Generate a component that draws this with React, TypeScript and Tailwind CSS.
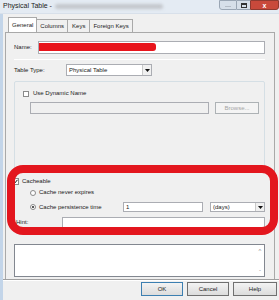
import React from 'react';

const font = { fontFamily: '"Liberation Sans", Arial, sans-serif' };

const Radio = ({ checked }: { checked?: boolean }) => (
  <div className="w-[6px] h-[6px] rounded-full border border-[#8a8a8a] bg-white flex items-center justify-center">
    {checked && <div className="w-[2px] h-[2px] rounded-full bg-[#222]" />}
  </div>
);

const Arrow = () => (
  <div className="w-[9px] h-full border-l border-[#c9c9c9] bg-[#f0f0f0] flex items-center justify-center">
    <svg width="5" height="3" viewBox="0 0 5 3">
      <path d="M0 0h5L2.5 3z" fill="#111" />
    </svg>
  </div>
);

export default function App() {
  return (
    <div className="relative w-[279px] h-[300px] overflow-hidden bg-[#f0f0f0] text-[6px] text-[#1a1a1a]" style={font}>
      {/* title bar */}
      <div className="h-[14px] flex items-start bg-[#e4ebf3] border-b border-[#d8e0ea]">
        <div className="flex items-center h-[12px] pl-[3px] gap-[3px]">
          <span className="text-[7px] text-[#222]">Physical Table -</span>
          <div className="w-[108px] h-[5px] rounded-full bg-[#c4c7cc] blur-[1.5px]" />
        </div>
        <div className="ml-auto flex h-[10px]">
          <div className="w-[18px] h-full rounded-bl-[3px] border border-[#9aa6b4] bg-[#d6dfe9] flex items-end justify-center pb-[2px]">
            <div className="w-[6px] h-[1px] bg-[#b4bcc6]" />
          </div>
          <div className="w-[13px] h-full border-y border-[#9aa6b4] bg-[#d6dfe9] flex items-center justify-center">
            <div className="w-[6px] h-[5px] border border-[#333] border-t-2" />
          </div>
          <div className="w-[29px] h-full rounded-br-[3px] bg-[#c9493b] border border-[#8f3a30] flex items-center justify-center text-white text-[7px] font-bold leading-none">
            x
          </div>
        </div>
      </div>

      <div className="flex h-[286px]">
        <div className="w-[3px] bg-[#c3d5e9]" />
        <div className="flex-1 flex flex-col pl-[2px]">
          {/* tabs */}
          <div className="flex items-end h-[18px] pl-[3px]">
            <div className="h-[15px] px-[3px] flex items-center border border-b-0 border-[#a9a9a9] bg-white">General</div>
            <div className="h-[13px] px-[3px] flex items-center border-r border-t border-[#a9a9a9]">Columns</div>
            <div className="h-[13px] px-[4px] flex items-center border-r border-t border-[#a9a9a9]">Keys</div>
            <div className="h-[13px] px-[3px] flex items-center border-r border-t border-[#a9a9a9]">Foreign Keys</div>
          </div>

          {/* panel */}
          <div className="w-[270px] h-[248px] border border-[#a9a9a9] border-b-0 flex flex-col pl-[8px] pr-[8px]">
            <div className="flex items-center mt-[8px] h-[13px]">
              <span className="w-[24px]">Name:</span>
              <div className="relative w-[227px] h-full border border-[#abadb3] bg-white">
                <div className="absolute left-0 top-[1px] w-[117px] h-[8px] bg-[#e8141c] rounded-r-[3px]" />
              </div>
            </div>
            <div className="mt-[5px] w-[251px] h-[1px] bg-[#a0a0a0] border-b border-white" />
            <div className="flex items-center mt-[4px] h-[12px]">
              <span className="w-[52px]">Table Type:</span>
              <div className="w-[86px] h-full border border-[#abadb3] bg-white flex items-center">
                <span className="flex-1 pl-[2px]">Physical Table</span>
                <Arrow />
              </div>
            </div>

            {/* group box */}
            <div className="mt-[5px] w-[251px] h-[90px] border border-[#d5dfe5] rounded-[2px] pl-[8px]">
              <div className="flex items-center mt-[7px] gap-[4px]">
                <div className="w-[6px] h-[6px] border border-[#8a8a8a] bg-white" />
                <span>Use Dynamic Name</span>
              </div>
              <div className="flex items-center mt-[4px] gap-[6px] pl-[7px]">
                <div className="w-[179px] h-[12px] border border-[#abadb3] bg-[#f0f0f0]" />
                <div className="w-[44px] h-[12px] border border-[#adb2b5] bg-[#f4f4f4] flex items-center justify-center text-[#a5a5a5]">
                  Browse...
                </div>
              </div>
            </div>

            {/* cacheable */}
            <div className="flex items-center mt-[6px] ml-[-2px] gap-[3px]">
              <div className="w-[7px] h-[7px] border border-[#8a8a8a] bg-white flex items-center justify-center">
                <svg width="5" height="5" viewBox="0 0 5 5">
                  <path d="M0.5 2.5l1.3 1.5L4.5 0.8" stroke="#111" strokeWidth="1" fill="none" />
                </svg>
              </div>
              <span>Cacheable</span>
            </div>
            <div className="flex items-center mt-[2px] ml-[16px] gap-[3px]">
              <Radio />
              <span>Cache never expires</span>
            </div>
            <div className="flex items-center mt-[5px] ml-[16px] h-[10px]">
              <Radio checked />
              <span className="ml-[3px] w-[84px]">Cache persistence time</span>
              <div className="w-[80px] h-full border border-[#abadb3] bg-white pl-[2px] flex items-center">1</div>
              <div className="ml-[7px] w-[55px] h-full border border-[#abadb3] bg-white flex items-center">
                <span className="flex-1 pl-[2px]">(days)</span>
                <Arrow />
              </div>
            </div>
            <div className="flex items-center mt-[5px] h-[11px]">
              <span className="w-[48px] pl-[2px] relative z-10">Hint:</span>
              <div className="w-[203px] h-full border border-[#abadb3] bg-white" />
            </div>

            {/* description */}
            <div className="mt-[16px] w-[251px] h-[33px] border border-[#828790] bg-white flex justify-end">
              <div className="w-[8px] h-full flex flex-col items-center justify-between py-[3px] text-[#8a8a8a]">
                <span className="leading-none">^</span>
                <span className="leading-none">-</span>
              </div>
            </div>
          </div>

          {/* bottom line and buttons */}
          <div className="h-[2px] ml-[-2px] border-t border-[#a0a0a0] bg-white mt-[-1px]" />
          <div className="flex justify-end gap-[4px] pr-[2px] mt-[1px]">
            <div className="w-[42px] h-[14px] border border-[#3c7fb1] bg-gradient-to-b from-[#f3f3f3] to-[#dcdcdc] flex items-center justify-center">OK</div>
            <div className="w-[42px] h-[14px] border border-[#707070] bg-gradient-to-b from-[#f3f3f3] to-[#dcdcdc] flex items-center justify-center">Cancel</div>
            <div className="w-[44px] h-[14px] border border-[#707070] bg-gradient-to-b from-[#f3f3f3] to-[#dcdcdc] flex items-center justify-center">Help</div>
          </div>
        </div>
      </div>

      {/* red annotation */}
      <div className="absolute left-[7px] top-[165px] w-[271px] h-[70px] border-[8px] border-[#e3161e] rounded-[16px]" />
    </div>
  );
}
